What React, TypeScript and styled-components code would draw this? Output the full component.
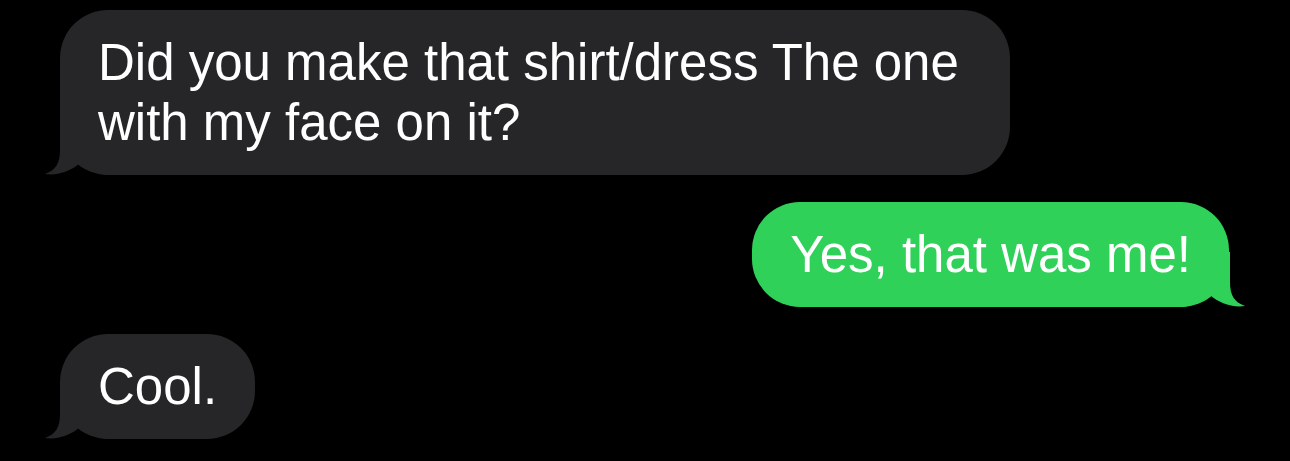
import styled, { createGlobalStyle } from "styled-components";

const GlobalStyle = createGlobalStyle`
  html, body {
    margin: 0;
    padding: 0;
    background: #000000;
  }
  body {
    font-family: "Liberation Sans", Arial, sans-serif;
    -webkit-font-smoothing: antialiased;
  }
`;

const Thread = styled.div`
  width: 1290px;
  height: 461px;
  box-sizing: border-box;
  padding: 10px 61px 0 60px;
  display: flex;
  flex-direction: column;
  gap: 27px;
  overflow: hidden;
`;

const Row = styled.div<{ mine?: boolean }>`
  display: flex;
  justify-content: ${(props) => (props.mine ? "flex-end" : "flex-start")};
`;

const Bubble = styled.div<{ mine?: boolean }>`
  position: relative;
  z-index: 0;
  max-width: 950px;
  box-sizing: border-box;
  padding: 22.5px 38px 22.5px 38px;
  border-radius: 48px;
  background-color: ${(props) => (props.mine ? "#30d158" : "#262629")};
  color: #ffffff;
  font-size: 51px;
  line-height: 60px;
`;

const Tail = styled.svg<{ mine?: boolean }>`
  position: absolute;
  z-index: -1;
  bottom: 0;
  width: 65px;
  height: 55px;
  ${(props) =>
    props.mine
      ? "right: -16px; transform: scaleX(-1);"
      : "left: -15px;"}
`;

function BubbleTail({ mine, color }: { mine?: boolean; color: string }) {
  return (
    <Tail mine={mine} viewBox="0 0 65 55">
      <path
        d="M15 0 L15 30 C15 43 11 50 0 54 C13 56 26 51 35 43 C43 50 55 55 65 55 L65 0 Z"
        fill={color}
      />
    </Tail>
  );
}

interface Message {
  text: string;
  mine?: boolean;
}

const messages: Message[] = [
  { text: "Did you make that shirt/dress The one with my face on it?" },
  { text: "Yes, that was me!", mine: true },
  { text: "Cool." },
];

function App() {
  return (
    <>
      <GlobalStyle />
      <Thread>
        {messages.map((m, i) => (
          <Row key={i} mine={m.mine}>
            <Bubble mine={m.mine}>
              <BubbleTail mine={m.mine} color={m.mine ? "#30d158" : "#262629"} />
              {m.text}
            </Bubble>
          </Row>
        ))}
      </Thread>
    </>
  );
}

export default App;
